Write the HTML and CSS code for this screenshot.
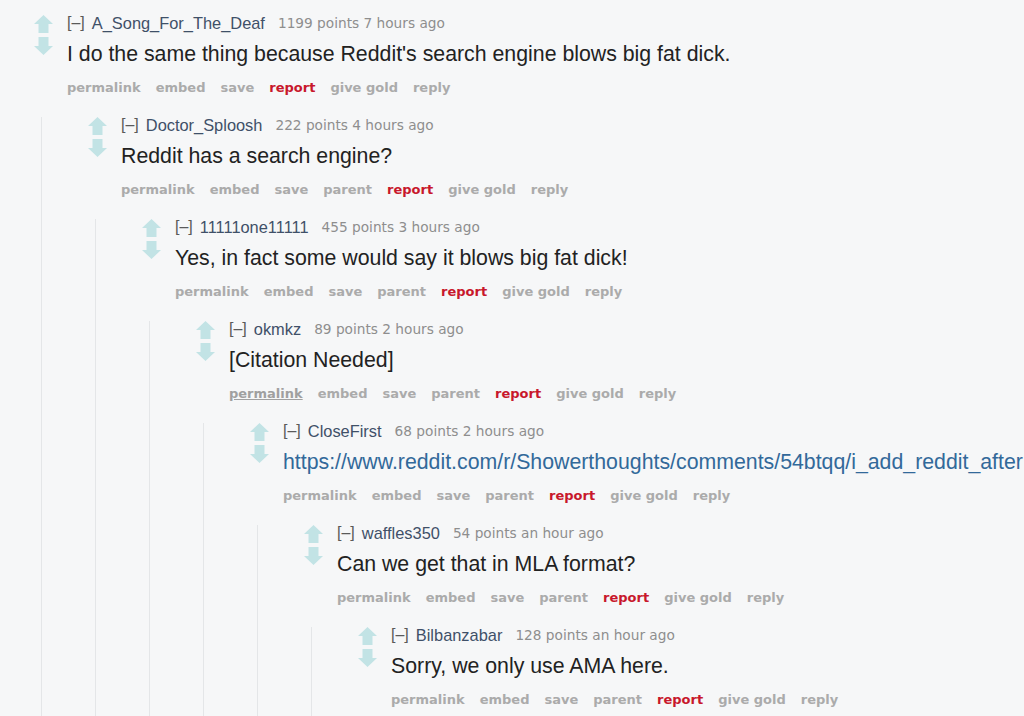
FILE: index.html
```html
<!DOCTYPE html>
<html>
<head>
<meta charset="utf-8">
<link rel="stylesheet" href="styles.css">
</head>
<body>
<div class="thread">
  <div class="comment">
    <div class="row">
      <div class="votes">
        <svg class="arrow" viewBox="0 0 19 18"><polygon points="9.5,0 19,9 14.5,9 14.5,18 4.5,18 4.5,9 0,9"/></svg>
        <svg class="arrow" viewBox="0 0 19 18"><polygon points="4.5,0 14.5,0 14.5,9 19,9 9.5,18 0,9 4.5,9"/></svg>
      </div>
      <div class="entry">
        <div class="tagline"><span class="toggle">[–]</span><span class="author">A_Song_For_The_Deaf</span><span class="score">1199 points 7 hours ago</span></div>
        <div class="md">I do the same thing because Reddit's search engine blows big fat dick.</div>
        <ul class="buttons"><li>permalink</li><li>embed</li><li>save</li><li class="report">report</li><li>give gold</li><li>reply</li></ul>
      </div>
    </div>
    <div class="children">
      <div class="comment">
        <div class="row">
          <div class="votes">
            <svg class="arrow" viewBox="0 0 19 18"><polygon points="9.5,0 19,9 14.5,9 14.5,18 4.5,18 4.5,9 0,9"/></svg>
            <svg class="arrow" viewBox="0 0 19 18"><polygon points="4.5,0 14.5,0 14.5,9 19,9 9.5,18 0,9 4.5,9"/></svg>
          </div>
          <div class="entry">
            <div class="tagline"><span class="toggle">[–]</span><span class="author">Doctor_Sploosh</span><span class="score">222 points 4 hours ago</span></div>
            <div class="md">Reddit has a search engine?</div>
            <ul class="buttons"><li>permalink</li><li>embed</li><li>save</li><li>parent</li><li class="report">report</li><li>give gold</li><li>reply</li></ul>
          </div>
        </div>
        <div class="children">
          <div class="comment">
            <div class="row">
              <div class="votes">
                <svg class="arrow" viewBox="0 0 19 18"><polygon points="9.5,0 19,9 14.5,9 14.5,18 4.5,18 4.5,9 0,9"/></svg>
                <svg class="arrow" viewBox="0 0 19 18"><polygon points="4.5,0 14.5,0 14.5,9 19,9 9.5,18 0,9 4.5,9"/></svg>
              </div>
              <div class="entry">
                <div class="tagline"><span class="toggle">[–]</span><span class="author">11111one11111</span><span class="score">455 points 3 hours ago</span></div>
                <div class="md">Yes, in fact some would say it blows big fat dick!</div>
                <ul class="buttons"><li>permalink</li><li>embed</li><li>save</li><li>parent</li><li class="report">report</li><li>give gold</li><li>reply</li></ul>
              </div>
            </div>
            <div class="children">
              <div class="comment">
                <div class="row">
                  <div class="votes">
                    <svg class="arrow" viewBox="0 0 19 18"><polygon points="9.5,0 19,9 14.5,9 14.5,18 4.5,18 4.5,9 0,9"/></svg>
                    <svg class="arrow" viewBox="0 0 19 18"><polygon points="4.5,0 14.5,0 14.5,9 19,9 9.5,18 0,9 4.5,9"/></svg>
                  </div>
                  <div class="entry">
                    <div class="tagline"><span class="toggle">[–]</span><span class="author">okmkz</span><span class="score">89 points 2 hours ago</span></div>
                    <div class="md">[Citation Needed]</div>
                    <ul class="buttons"><li class="hover">permalink</li><li>embed</li><li>save</li><li>parent</li><li class="report">report</li><li>give gold</li><li>reply</li></ul>
                  </div>
                </div>
                <div class="children">
                  <div class="comment">
                    <div class="row">
                      <div class="votes">
                        <svg class="arrow" viewBox="0 0 19 18"><polygon points="9.5,0 19,9 14.5,9 14.5,18 4.5,18 4.5,9 0,9"/></svg>
                        <svg class="arrow" viewBox="0 0 19 18"><polygon points="4.5,0 14.5,0 14.5,9 19,9 9.5,18 0,9 4.5,9"/></svg>
                      </div>
                      <div class="entry">
                        <div class="tagline"><span class="toggle">[–]</span><span class="author">CloseFirst</span><span class="score">68 points 2 hours ago</span></div>
                        <div class="md link">https://www.reddit.com/r/Showerthoughts/comments/54btqq/i_add_reddit_after</div>
                        <ul class="buttons"><li>permalink</li><li>embed</li><li>save</li><li>parent</li><li class="report">report</li><li>give gold</li><li>reply</li></ul>
                      </div>
                    </div>
                    <div class="children">
                      <div class="comment">
                        <div class="row">
                          <div class="votes">
                            <svg class="arrow" viewBox="0 0 19 18"><polygon points="9.5,0 19,9 14.5,9 14.5,18 4.5,18 4.5,9 0,9"/></svg>
                            <svg class="arrow" viewBox="0 0 19 18"><polygon points="4.5,0 14.5,0 14.5,9 19,9 9.5,18 0,9 4.5,9"/></svg>
                          </div>
                          <div class="entry">
                            <div class="tagline"><span class="toggle">[–]</span><span class="author">waffles350</span><span class="score">54 points an hour ago</span></div>
                            <div class="md">Can we get that in MLA format?</div>
                            <ul class="buttons"><li>permalink</li><li>embed</li><li>save</li><li>parent</li><li class="report">report</li><li>give gold</li><li>reply</li></ul>
                          </div>
                        </div>
                        <div class="children">
                          <div class="comment">
                            <div class="row">
                              <div class="votes">
                                <svg class="arrow" viewBox="0 0 19 18"><polygon points="9.5,0 19,9 14.5,9 14.5,18 4.5,18 4.5,9 0,9"/></svg>
                                <svg class="arrow" viewBox="0 0 19 18"><polygon points="4.5,0 14.5,0 14.5,9 19,9 9.5,18 0,9 4.5,9"/></svg>
                              </div>
                              <div class="entry">
                                <div class="tagline"><span class="toggle">[–]</span><span class="author">Bilbanzabar</span><span class="score">128 points an hour ago</span></div>
                                <div class="md">Sorry, we only use AMA here.</div>
                                <ul class="buttons"><li>permalink</li><li>embed</li><li>save</li><li>parent</li><li class="report">report</li><li>give gold</li><li>reply</li></ul>
                              </div>
                            </div>
                            <div class="children"></div>
                          </div>
                        </div>
                      </div>
                    </div>
                  </div>
                </div>
              </div>
            </div>
          </div>
        </div>
      </div>
    </div>
  </div>
</div>
</body>
</html>
```

FILE: styles.css
```css
html, body {
  margin: 0;
  height: 100%;
  overflow: hidden;
  background: #f6f7f8;
}
body {
  font-family: "Liberation Sans", Arial, sans-serif;
  color: #222;
}
.thread {
  padding: 15px 0 0 34px;
  min-height: 100%;
  box-sizing: border-box;
  display: flex;
  flex-direction: column;
}
.comment {
  display: flex;
  flex-direction: column;
  flex: 1;
}
.row {
  display: flex;
}
.votes {
  width: 33px;
  flex: none;
  display: flex;
  flex-direction: column;
  gap: 4px;
}
.arrow {
  width: 19px;
  height: 18px;
  display: block;
}
.arrow polygon {
  fill: #c2e3e5;
}
.entry {
  flex: 1;
  min-width: 0;
}
.tagline {
  height: 16px;
  line-height: 16px;
  display: flex;
  align-items: center;
  white-space: nowrap;
}
.toggle {
  font-size: 16px;
  color: #5a5a5a;
  margin-right: 7px;
}
.author {
  font-size: 16.4px;
  color: #3f5068;
  margin-right: 13px;
}
.score {
  font-family: "DejaVu Sans", Verdana, sans-serif;
  font-size: 13.7px;
  color: #8e8e8e;
}
.md {
  margin-top: 11px;
  font-size: 21.3px;
  line-height: 24px;
  height: 24px;
  white-space: nowrap;
  overflow: hidden;
  color: #222;
}
.md.link {
  color: #32699a;
}
.buttons {
  list-style: none;
  margin: 14px 0 0;
  padding: 0;
  display: flex;
  gap: 15px;
  height: 16px;
  line-height: 16px;
  font-family: "DejaVu Sans", Verdana, sans-serif;
  font-weight: bold;
  font-size: 13px;
  color: #ababab;
  white-space: nowrap;
}
.buttons .report {
  color: #c8182c;
}
.buttons .hover {
  text-decoration: underline;
  color: #a0a0a0;
}
.children {
  margin-top: 21px;
  margin-left: 7px;
  border-left: 1px solid #e4e6e8;
  padding-left: 46px;
  flex: 1;
  display: flex;
  flex-direction: column;
}
```
